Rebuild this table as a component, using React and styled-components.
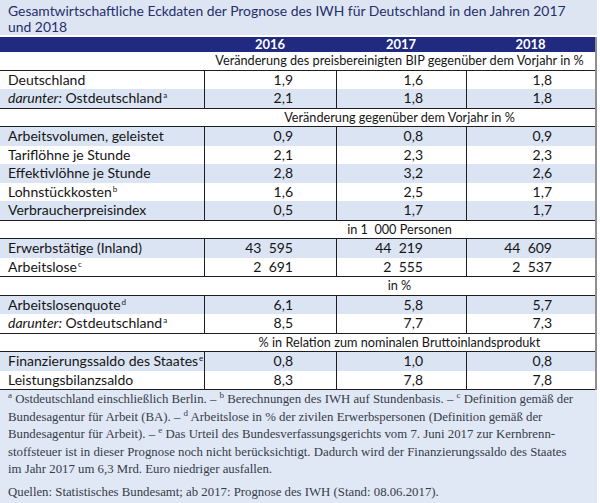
import React from 'react';
import styled, { createGlobalStyle } from 'styled-components';

const GlobalStyle = createGlobalStyle`
  body {
    margin: 0;
    background: #fff;
  }
`;

const Page = styled.div`
  width: 597px;
  font-family: Lato, 'Liberation Sans', sans-serif;
  color: #151515;
`;

const Title = styled.h1`
  margin: 0 0 2px;
  height: 35px;
  box-sizing: border-box;
  padding: 3px 8px 0;
  background: #dde5f2;
  color: #262f6c;
  font-size: 13.9px;
  font-weight: normal;
  line-height: 15.5px;
  white-space: nowrap;
`;

const Table = styled.div`
  border-right: 2px solid #8f8f8f;
`;

const HeadRow = styled.div`
  display: grid;
  grid-template-columns: 204px 132px 130px 129px;
  height: 15px;
  background: #1f2a80;
  color: #fff;
  font-size: 13px;
  font-weight: bold;
  line-height: 15px;
`;

const HeadCell = styled.div`
  text-align: center;
`;

const SubHead = styled.div`
  display: grid;
  grid-template-columns: 204px 391px;
  height: 17.5px;
  background: #fff;
  font-size: 12.7px;
  line-height: 17.5px;
`;

const SubHeadText = styled.div`
  grid-column: 2;
  text-align: center;
  white-space: pre;
`;

const Block = styled.div`
  border-top: 1px solid #1e1e1e;
  border-bottom: 1px solid #1e1e1e;
`;

const Row = styled.div`
  display: grid;
  grid-template-columns: 204px 132px 130px 129px;
  height: 18.5px;
  background: ${(p) => (p.$shade ? '#dbe4f3' : '#fff')};
  font-size: 14px;
  line-height: 18.5px;
`;

const Label = styled.div`
  padding-left: 8px;
  white-space: nowrap;
`;

const Value = styled.div`
  border-left: 1px solid #1e1e1e;
  text-align: right;
  padding-right: 43px;
  white-space: pre;
`;

const Sup = styled.sup`
  font-size: 8px;
  line-height: 0;
  vertical-align: 5px;
  margin-left: 1px;
`;

const Notes = styled.div`
  min-height: 114px;
  padding: 1px 8px 0;
  background: #e1e8f5;
  color: #353c48;
  font-family: 'Liberation Serif', 'DejaVu Serif', serif;
  font-size: 12.8px;
  line-height: 17.5px;
`;

const NoteLine = styled.span`
  display: block;
  white-space: nowrap;
`;

const Sources = styled.p`
  margin: 5px 0 0;
`;

const NoteSup = styled.sup`
  font-size: 9px;
  line-height: 0;
  vertical-align: 5px;
`;

const Ost = () => (
  <>
    <em>darunter:</em> Ostdeutschland<Sup>a</Sup>
  </>
);

const sections = [
  {
    title: 'Veränderung des preisbereinigten BIP gegenüber dem Vorjahr in %',
    rows: [
      { label: 'Deutschland', values: ['1,9', '1,6', '1,8'], shade: false },
      { label: <Ost />, values: ['2,1', '1,8', '1,8'], shade: true },
    ],
  },
  {
    title: 'Veränderung gegenüber dem Vorjahr in %',
    rows: [
      { label: 'Arbeitsvolumen, geleistet', values: ['0,9', '0,8', '0,9'], shade: true },
      { label: 'Tariflöhne je Stunde', values: ['2,1', '2,3', '2,3'], shade: false },
      { label: 'Effektivlöhne je Stunde', values: ['2,8', '3,2', '2,6'], shade: true },
      { label: <>Lohnstückkosten<Sup>b</Sup></>, values: ['1,6', '2,5', '1,7'], shade: false },
      { label: 'Verbraucherpreisindex', values: ['0,5', '1,7', '1,7'], shade: true },
    ],
  },
  {
    title: 'in 1  000 Personen',
    rows: [
      { label: 'Erwerbstätige (Inland)', values: ['43  595', '44  219', '44  609'], shade: true },
      { label: <>Arbeitslose<Sup>c</Sup></>, values: ['2  691', '2  555', '2  537'], shade: false },
    ],
  },
  {
    title: 'in %',
    rows: [
      { label: <>Arbeitslosenquote<Sup>d</Sup></>, values: ['6,1', '5,8', '5,7'], shade: true },
      { label: <Ost />, values: ['8,5', '7,7', '7,3'], shade: false },
    ],
  },
  {
    title: '% in Relation zum nominalen Bruttoinlandsprodukt',
    rows: [
      { label: <>Finanzierungssaldo des Staates<Sup>e</Sup></>, values: ['0,8', '1,0', '0,8'], shade: true },
      { label: 'Leistungsbilanzsaldo', values: ['8,3', '7,8', '7,8'], shade: false },
    ],
  },
];

export default function App() {
  return (
    <Page>
      <GlobalStyle />
      <Title>
        Gesamtwirtschaftliche Eckdaten der Prognose des IWH für Deutschland in den Jahren 2017
        <br />
        und 2018
      </Title>
      <Table>
        <HeadRow>
          <HeadCell />
          <HeadCell>2016</HeadCell>
          <HeadCell>2017</HeadCell>
          <HeadCell>2018</HeadCell>
        </HeadRow>
        {sections.map((section) => (
          <React.Fragment key={section.title}>
            <SubHead>
              <SubHeadText>{section.title}</SubHeadText>
            </SubHead>
            <Block>
              {section.rows.map((row, i) => (
                <Row key={i} $shade={row.shade}>
                  <Label>{row.label}</Label>
                  {row.values.map((v, j) => (
                    <Value key={j}>{v}</Value>
                  ))}
                </Row>
              ))}
            </Block>
          </React.Fragment>
        ))}
      </Table>
      <Notes>
        <NoteLine>
          <NoteSup>a</NoteSup> Ostdeutschland einschließlich Berlin. – <NoteSup>b</NoteSup> Berechnungen des IWH auf
          Stundenbasis. – <NoteSup>c</NoteSup> Definition gemäß der
        </NoteLine>
        <NoteLine>
          Bundesagentur für Arbeit (BA). – <NoteSup>d</NoteSup> Arbeitslose in % der zivilen Erwerbspersonen (Definition
          gemäß der
        </NoteLine>
        <NoteLine>
          Bundesagentur für Arbeit). – <NoteSup>e</NoteSup> Das Urteil des Bundesverfassungsgerichts vom 7. Juni 2017 zur
          Kernbrenn-
        </NoteLine>
        <NoteLine>
          stoffsteuer ist in dieser Prognose noch nicht berücksichtigt. Dadurch wird der Finanzierungssaldo des Staates
        </NoteLine>
        <NoteLine>im Jahr 2017 um 6,3 Mrd. Euro niedriger ausfallen.</NoteLine>
        <Sources>Quellen: Statistisches Bundesamt; ab 2017: Prognose des IWH (Stand: 08.06.2017).</Sources>
      </Notes>
    </Page>
  );
}
